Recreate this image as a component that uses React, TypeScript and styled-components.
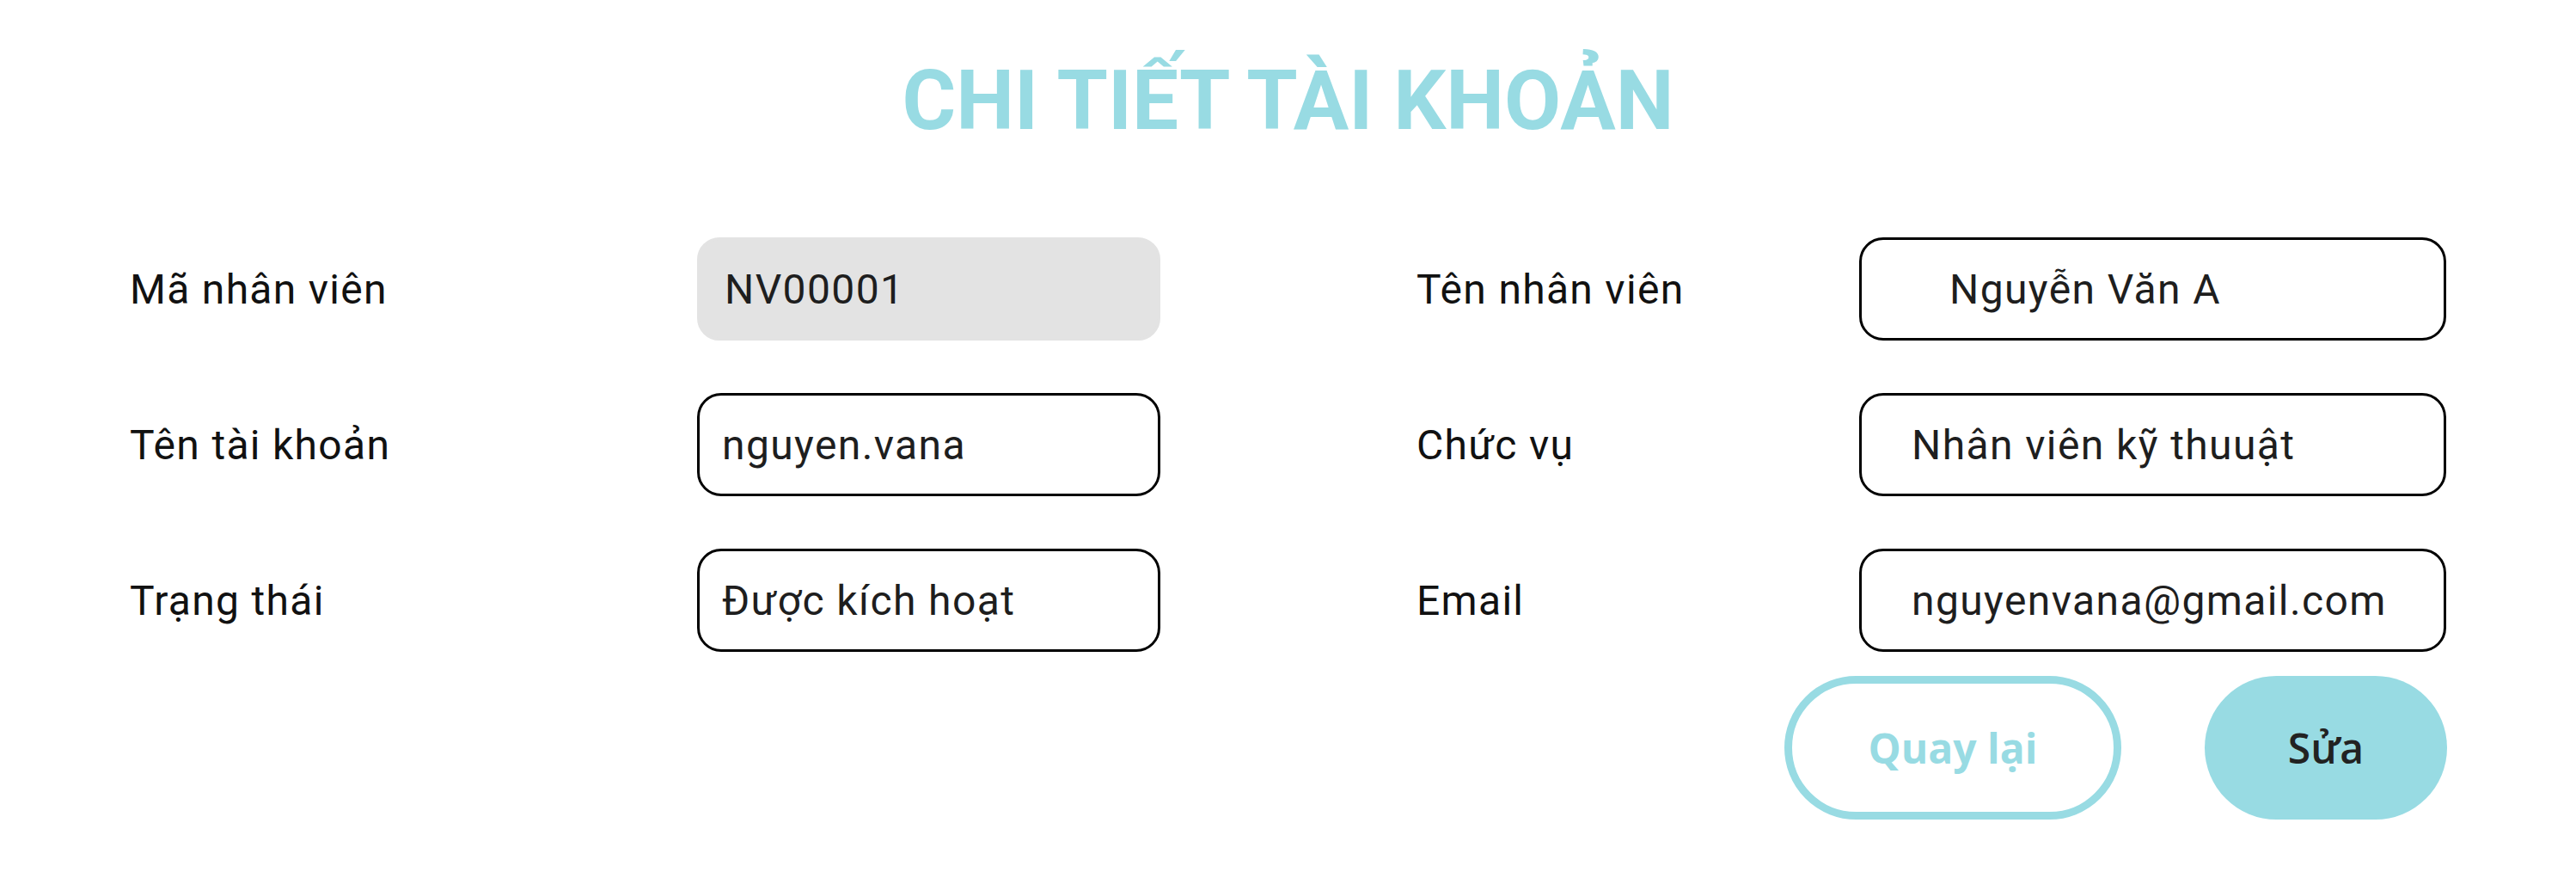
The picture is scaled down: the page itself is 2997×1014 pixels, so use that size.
import React from "react";
import styled, { createGlobalStyle } from "styled-components";

const GlobalStyle = createGlobalStyle`
  html, body {
    margin: 0;
    padding: 0;
    background: #ffffff;
  }
  body {
    font-family: Roboto, "Noto Sans", Arial, sans-serif;
  }
  * { box-sizing: border-box; }
`;

const ACCENT = "#98dbe3";

const Page = styled.main`
  width: 2997px;
  min-height: 1014px;
  padding: 61px 0 0 151px;
  background: #ffffff;
`;

const Title = styled.h1`
  margin: 0 0 103px -151px;
  width: 2997px;
  text-align: center;
  font-family: Roboto, "Noto Sans", sans-serif;
  font-weight: 700;
  font-size: 96px;
  line-height: 112px;
  color: ${ACCENT};
  letter-spacing: 0;
`;

const FormGrid = styled.section`
  display: grid;
  grid-template-columns: 660px 539px 298px 515px 683px;
  grid-auto-rows: 120px;
  row-gap: 61px;
  align-items: center;
`;

const Label = styled.div<{ $col: number }>`
  grid-column: ${(p) => p.$col};
  font-family: Roboto, "Noto Sans", sans-serif;
  font-size: 48px;
  letter-spacing: 1.3px;
  color: #111111;
  white-space: nowrap;
`;

const Field = styled.div<{ $col: number; $indent: number; $disabled?: boolean }>`
  grid-column: ${(p) => p.$col};
  height: 120px;
  display: flex;
  align-items: center;
  padding-left: ${(p) => p.$indent}px;
  border: 3px solid ${(p) => (p.$disabled ? "#e3e3e3" : "#000000")};
  border-radius: ${(p) => (p.$disabled ? "26px" : "28px")};
  background: ${(p) => (p.$disabled ? "#e3e3e3" : "#ffffff")};
  font-family: Roboto, "Noto Sans", sans-serif;
  font-size: 48px;
  letter-spacing: 1.4px;
  color: #1e1e1e;
  white-space: nowrap;
`;

const Actions = styled.div`
  width: 2696px;
  margin-top: 28px;
  display: flex;
  justify-content: flex-end;
  gap: 97px;
`;

const Button = styled.button<{ $variant: "outline" | "solid" }>`
  height: 167px;
  width: ${(p) => (p.$variant === "outline" ? "392px" : "282px")};
  border-radius: 84px;
  border: ${(p) => (p.$variant === "outline" ? `9px solid ${ACCENT}` : "none")};
  background: ${(p) => (p.$variant === "outline" ? "#ffffff" : ACCENT)};
  color: ${(p) => (p.$variant === "outline" ? ACCENT : "#222222")};
  font-family: "Open Sans", "Noto Sans", sans-serif;
  font-weight: ${(p) => (p.$variant === "outline" ? 700 : 600)};
  font-size: 48px;
  padding: 0;
  display: flex;
  align-items: center;
  justify-content: center;
  cursor: pointer;
`;

type Row = {
  leftLabel: string;
  leftValue: string;
  leftDisabled?: boolean;
  rightLabel: string;
  rightValue: string;
  rightIndent: number;
};

const rows: Row[] = [
  {
    leftLabel: "Mã nhân viên",
    leftValue: "NV00001",
    leftDisabled: true,
    rightLabel: "Tên nhân viên",
    rightValue: "Nguyễn Văn A",
    rightIndent: 102,
  },
  {
    leftLabel: "Tên tài khoản",
    leftValue: "nguyen.vana",
    rightLabel: "Chức vụ",
    rightValue: "Nhân viên kỹ thuuật",
    rightIndent: 58,
  },
  {
    leftLabel: "Trạng thái",
    leftValue: "Được kích hoạt",
    rightLabel: "Email",
    rightValue: "nguyenvana@gmail.com",
    rightIndent: 58,
  },
];

export default function App() {
  return (
    <>
      <GlobalStyle />
      <Page>
        <Title>CHI TIẾT TÀI KHOẢN</Title>
        <FormGrid>
          {rows.map((r) => (
            <React.Fragment key={r.leftLabel}>
              <Label $col={1}>{r.leftLabel}</Label>
              <Field $col={2} $indent={r.leftDisabled ? 29 : 26} $disabled={r.leftDisabled}>
                {r.leftValue}
              </Field>
              <Label $col={4}>{r.rightLabel}</Label>
              <Field $col={5} $indent={r.rightIndent}>
                {r.rightValue}
              </Field>
            </React.Fragment>
          ))}
        </FormGrid>
        <Actions>
          <Button $variant="outline">Quay lại</Button>
          <Button $variant="solid">Sửa</Button>
        </Actions>
      </Page>
    </>
  );
}
